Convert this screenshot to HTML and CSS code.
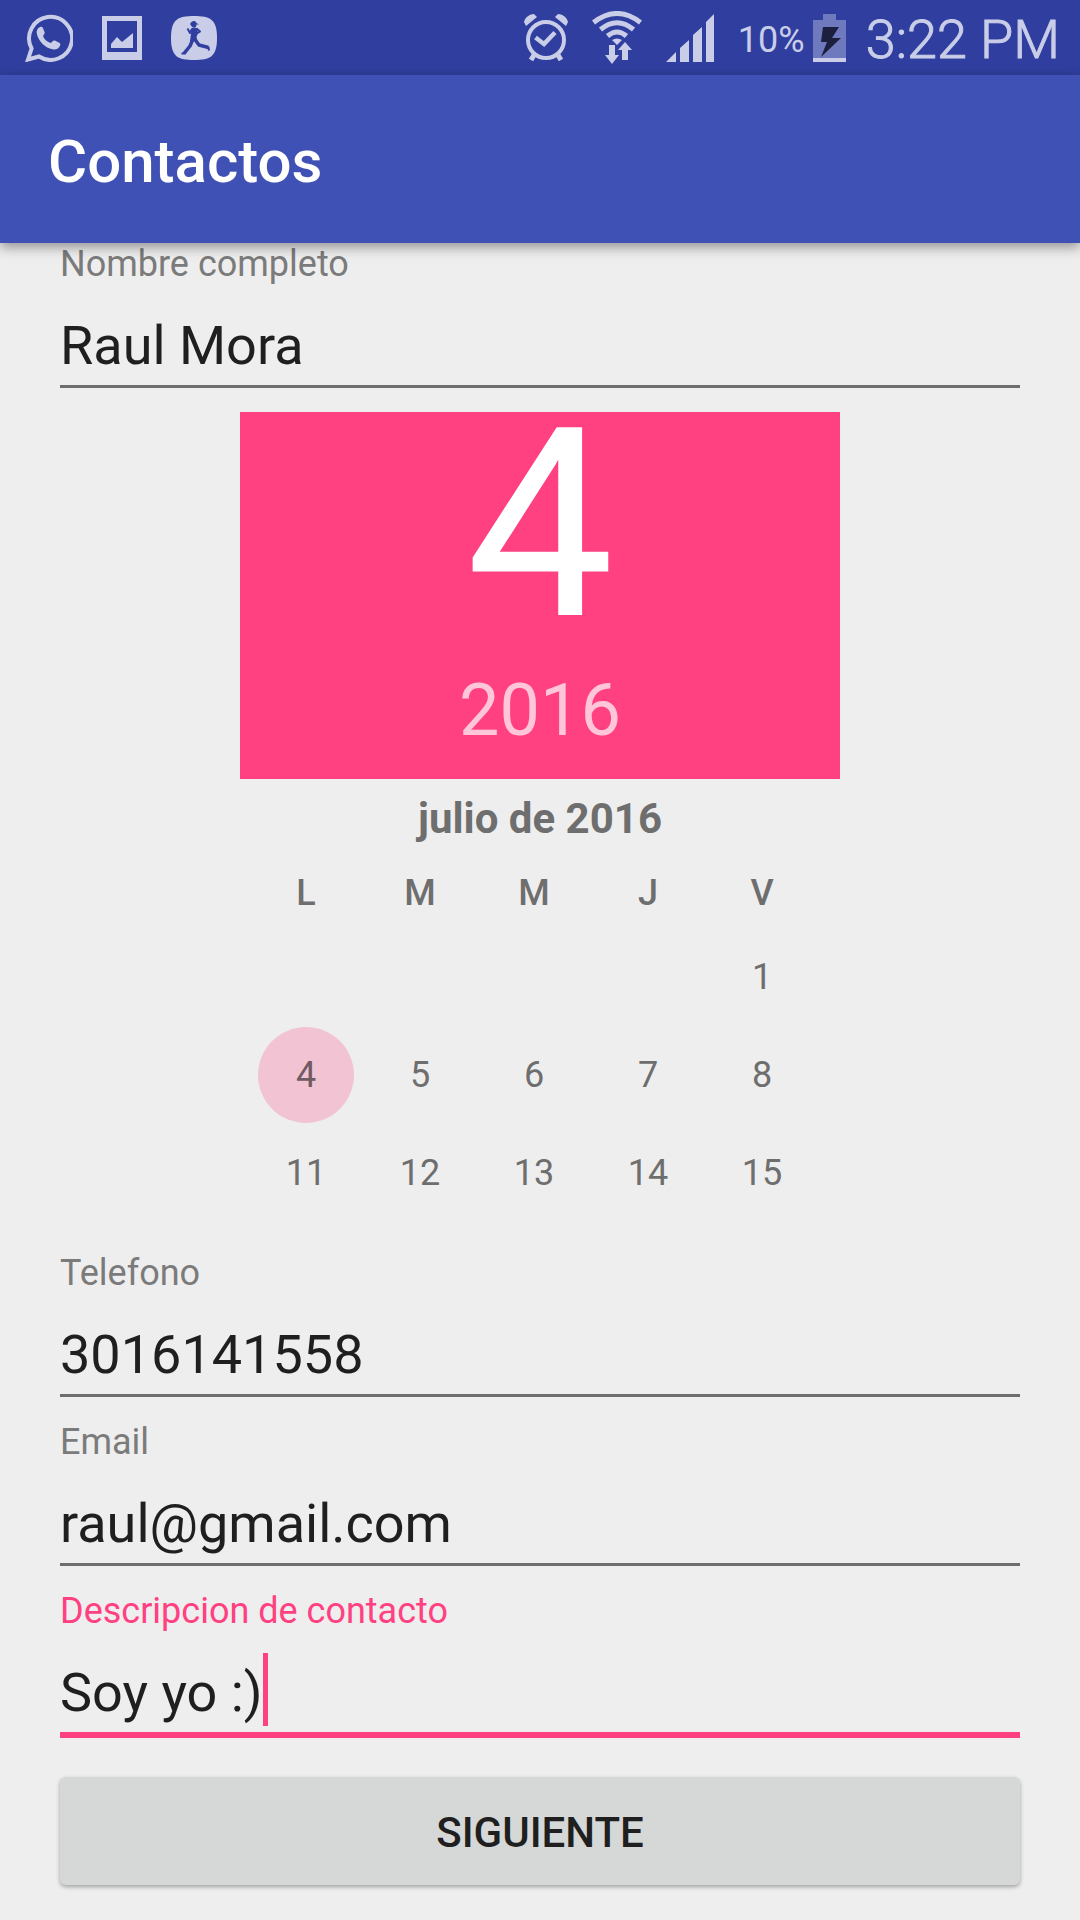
FILE: index.html
```html
<!DOCTYPE html>
<html lang="es">
<head>
<meta charset="utf-8">
<meta name="viewport" content="width=device-width, initial-scale=1">
<title>Contactos</title>
<link rel="stylesheet" href="styles.css">
</head>
<body>
<div class="status-bar">
  <div class="status-group status-group--apps">
    <svg class="icon" width="48" height="48" viewBox="0 0 48 48" aria-hidden="true">
      <path d="M3 45.500 6.600 34.500A21.500 21.500 0 1 1 14 42.500Z" fill="none" stroke="currentColor" stroke-width="4"/>
      <path d="M15 13c-2.500 1-3.600 3.500-3.300 6 1.200 8 9 15.500 16.800 16.500 3 .2 5.800-1.200 6.800-4.500.2-1.200-.2-1.800-1-2.300l-4-2c-1-.5-2-.4-2.700.6l-1.600 1.800c-3.800-1-6.800-3.900-8-7.200l1.300-2c.5-.7.500-1.300.2-2l-1.800-4.400c-.5-.8-1.500-1-2.700-.5Z" fill="currentColor"/>
    </svg>
    <svg class="icon" width="40" height="44" viewBox="0 0 40 44" aria-hidden="true">
      <path d="M0 0H40V44H0ZM5 5V36H35V5Z" fill="currentColor" fill-rule="evenodd"/>
      <path d="M9 32V28L15 21 20 26 31 17V32Z" fill="currentColor"/>
    </svg>
    <svg class="icon" width="46" height="44" viewBox="0 0 46 44" aria-hidden="true">
      <path d="M23 0C39 0 46 3 46 22S39 44 23 44 0 41 0 22 7 0 23 0Z" fill="currentColor"/>
      <g class="icon-cutout">
        <path d="M20 6.500Q21 4.500 24 5L25.500 7 28 8.500H25.500L25 11Q23 12.500 21 11L19 8Z"/>
        <path d="M20.500 12H26L27 17 25.500 21 26.500 25H19L20 18Z"/>
        <path d="M21 13 19 17 16.500 12.500M25.500 12.500 29 15.500 26 17.500" stroke-width="2"/>
        <path d="M22 23 19 30 13 37.500" stroke-width="3.500"/>
        <path d="M23.500 23 28 29 37.500 31.500" stroke-width="3.500"/>
        <path d="M14.500 37.500 10.500 37.500M37.500 31 38 34.500" stroke-width="2"/>
      </g>
    </svg>
  </div>
  <div class="status-group">
    <svg class="icon" width="44" height="48" viewBox="0 0 44 48" aria-hidden="true">
      <g fill="none" stroke="currentColor">
        <circle cx="22" cy="26" r="18" stroke-width="4"/>
        <path d="M11.500 23.500 20 30 31 18.500" stroke-width="4.500"/>
        <path d="M10 41 7 46M34 41 37 46" stroke-width="5"/>
      </g>
      <path d="M0 8C1 3 6 0 10 0L13 3 2 12ZM44 8C43 3 38 0 34 0L31 3 42 12Z" fill="currentColor"/>
    </svg>
    <svg class="icon" width="50" height="54" viewBox="0 0 50 54" aria-hidden="true">
      <g fill="none" stroke="currentColor" stroke-width="5">
        <path d="M1.500 11.500Q25-6.500 48.500 11.500"/>
        <path d="M8.500 18.500Q25 5 41.500 18.500"/>
        <path d="M15.500 25Q25 17 34.500 25"/>
      </g>
      <path d="M20 29Q25 26 30 29L25 34Z" fill="currentColor"/>
      <path d="M17 34h6v10h4l-7 9-7-9h4ZM30 49V39h-4l7-8 7 8h-4v10Z" fill="currentColor"/>
    </svg>
    <svg class="icon" width="48" height="48" viewBox="0 0 48 48" aria-hidden="true">
      <path d="M0 48 10 38V48ZM14 34 23 26V48H14ZM27 21 36 13V48H27ZM40 8 48 0V48H40Z" fill="currentColor"/>
    </svg>
    <span class="battery">
      <span class="battery-level">10%</span>
      <svg class="icon" width="33" height="48" viewBox="0 0 33 48" aria-hidden="true">
        <path d="M0 6H10V0H23V6H33V44H0Z" fill="#6f79bd"/>
        <path d="M0 44H33V48H0Z" fill="currentColor"/>
        <path d="M10 13H26L19 24H28L8 43 14 28H8Z" fill="#1c1f3d"/>
      </svg>
    </span>
    <time class="clock" datetime="15:22">3:22 PM</time>
  </div>
</div>

<header class="app-bar">
  <h1 class="app-title">Contactos</h1>
</header>

<main>
  <form class="contact-form">
    <div class="field">
      <label class="field-label" for="name">Nombre completo</label>
      <input class="field-input" id="name" type="text" value="Raul Mora">
    </div>

    <section class="date-picker" aria-label="Fecha">
      <div class="date-header">
        <span class="date-day">4</span>
        <span class="date-year">2016</span>
      </div>
      <table class="calendar">
        <caption class="calendar-month">julio de 2016</caption>
        <thead>
          <tr><th scope="col">L</th><th scope="col">M</th><th scope="col">M</th><th scope="col">J</th><th scope="col">V</th></tr>
        </thead>
        <tbody>
          <tr><td></td><td></td><td></td><td></td><td><button class="day" type="button">1</button></td></tr>
          <tr>
            <td><button class="day day--selected" type="button" aria-pressed="true">4</button></td>
            <td><button class="day" type="button">5</button></td>
            <td><button class="day" type="button">6</button></td>
            <td><button class="day" type="button">7</button></td>
            <td><button class="day" type="button">8</button></td>
          </tr>
          <tr>
            <td><button class="day" type="button">11</button></td>
            <td><button class="day" type="button">12</button></td>
            <td><button class="day" type="button">13</button></td>
            <td><button class="day" type="button">14</button></td>
            <td><button class="day" type="button">15</button></td>
          </tr>
        </tbody>
      </table>
    </section>

    <div class="field">
      <label class="field-label" for="phone">Telefono</label>
      <input class="field-input" id="phone" type="tel" value="3016141558">
    </div>
    <div class="field">
      <label class="field-label" for="email">Email</label>
      <input class="field-input" id="email" type="email" value="raul@gmail.com">
    </div>
    <div class="field field--active">
      <label class="field-label" for="description">Descripcion de contacto</label>
      <input class="field-input" id="description" type="text" value="Soy yo :)">
      <span class="caret" aria-hidden="true"></span>
    </div>

    <button class="submit" type="submit">SIGUIENTE</button>
  </form>
</main>
</body>
</html>
```

FILE: styles.css
```css
:root {
  --primary: #3f51b5;
  --primary-dark: #303f9f;
  --accent: #ff4081;
  --surface: #eeeeee;
  --text: #1f1f1f;
  --text-muted: #6e6e6e;
  --status: #c9cde8;
}

* {
  box-sizing: border-box;
}

body {
  margin: 0;
  min-height: 100vh;
  background: var(--surface);
  color: var(--text);
  font-family: Roboto, "Liberation Sans", sans-serif;
}

button,
input {
  font: inherit;
  color: inherit;
}

.status-bar {
  display: flex;
  align-items: center;
  justify-content: space-between;
  height: 75px;
  padding: 0 20px 0 25px;
  background: var(--primary-dark);
  color: var(--status);
}

.status-group {
  display: flex;
  align-items: center;
  gap: 24px;
}

.status-group--apps {
  gap: 29px;
}

.icon {
  display: block;
  flex: none;
}

.icon-cutout {
  fill: var(--primary-dark);
  stroke: var(--primary-dark);
  stroke-width: 0;
  stroke-linejoin: round;
}

.icon-cutout [stroke-width] {
  fill: none;
}

.battery {
  display: flex;
  align-items: center;
  gap: 8px;
}

.battery-level,
.clock {
  padding-top: 4px;
}

.battery-level {
  font-size: 36px;
  line-height: 42px;
}

.clock {
  margin-left: -4px;
  font-size: 54px;
  font-weight: 300;
  line-height: 63px;
  -webkit-text-stroke: 1px var(--status);
}

.app-bar {
  position: relative;
  z-index: 1;
  display: flex;
  align-items: center;
  height: 168px;
  padding: 5px 48px 0;
  background: var(--primary);
  box-shadow: 0 4px 12px rgba(0, 0, 0, 0.4);
  color: #ffffff;
}

.app-title {
  margin: 0;
  font-size: 60px;
  font-weight: 500;
  line-height: 70px;
}

.contact-form {
  display: flex;
  flex-direction: column;
  gap: 24px;
  padding: 0 60px 35px;
}

.field {
  position: relative;
  display: flex;
  flex-direction: column;
}

.field-label {
  color: #7b7b7b;
  font-size: 36px;
  line-height: 42px;
}

.field-input {
  width: 100%;
  height: 103px;
  padding: 29px 0 8px;
  border: 0;
  border-bottom: 3px solid var(--text-muted);
  border-radius: 0;
  outline: 0;
  background: transparent;
  font-size: 54px;
  line-height: 63px;
}

.field--active .field-label {
  color: var(--accent);
}

.field--active .field-input {
  height: 106px;
  border-bottom: 6px solid var(--accent);
}

.caret {
  position: absolute;
  bottom: 12px;
  left: 203px;
  width: 5px;
  height: 73px;
  background: var(--accent);
}

.date-picker {
  align-self: center;
  width: 100%;
  max-width: 600px;
  margin-bottom: 6px;
}

.date-header {
  display: flex;
  flex-direction: column;
  align-items: center;
  gap: 31px;
  padding-bottom: 26px;
  background: var(--accent);
  color: #ffffff;
}

.date-day {
  font-size: 264px;
  line-height: 226px;
}

.date-year {
  color: #ffc6d9;
  font-size: 72px;
  line-height: 84px;
}

.calendar {
  width: 95%;
  margin-left: 9px;
  border-collapse: collapse;
  table-layout: fixed;
  color: var(--text-muted);
  font-size: 36px;
  text-align: center;
}

.calendar-month {
  font-size: 42px;
  font-weight: 700;
  line-height: 79px;
  /* centres the month on the header rather than on the day columns */
  padding-left: 12px;
}

.calendar th {
  height: 70px;
  padding: 0;
  font-weight: 500;
}

.calendar td {
  height: 98px;
  padding: 0;
}

.day {
  display: block;
  width: 96px;
  height: 96px;
  margin: 0 auto;
  padding: 0;
  border: 0;
  border-radius: 50%;
  background: transparent;
}

.day--selected {
  background: #f2c4d3;
  color: #705a63;
}

.submit {
  height: 108px;
  margin-top: 15px;
  padding: 2px 0 0;
  border: 0;
  border-radius: 6px;
  background: #d6d8d7;
  box-shadow: 0 2px 4px rgba(0, 0, 0, 0.32);
  font-size: 42px;
  font-weight: 500;
}
```
